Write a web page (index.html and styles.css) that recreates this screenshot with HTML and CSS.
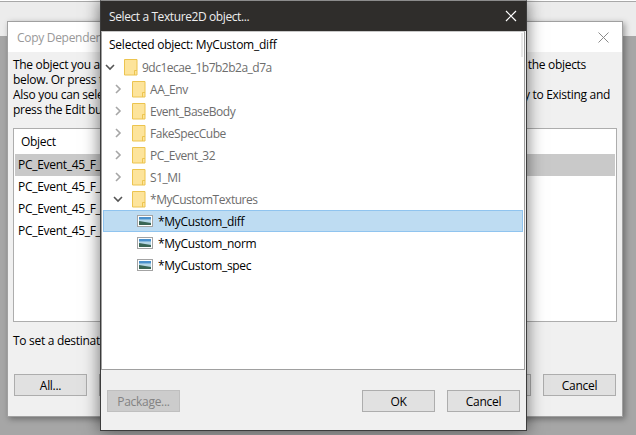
FILE: index.html
```html
<!DOCTYPE html>
<html lang="en">

<head>
    <meta charset="UTF-8">
    <title>Select a Texture2D object</title>
    <link rel="stylesheet" href="styles.css">
</head>

<body>
    <svg class="defs" width="0" height="0">
        <symbol id="folder" viewBox="0 0 14 17">
            <path d="M.5.5h12.5v15.5h-12.5z" fill="#fde49b" stroke="#ecc44f" />
            <path d="M10.5 16v-4.5h2.5" fill="none" stroke="#ecc44f" />
        </symbol>
        <symbol id="pic" viewBox="0 0 16 12">
            <rect x=".5" y=".5" width="15" height="11" fill="#fff" stroke="#a3a3a3" />
            <rect x="2" y="2" width="12" height="8" fill="#b5d6e6" />
            <rect x="2" y="2" width="12" height="2" fill="#4a90cc" />
            <rect x="2" y="4" width="12" height="1" fill="#86b8dc" />
            <path d="M2 6l6 1 6 1v2h-12z" fill="#3a6655" />
        </symbol>
        <symbol id="open" viewBox="0 0 10 10">
            <path d="M1 3l4 4 4-4" fill="none" stroke="#555" stroke-width="1.6" />
        </symbol>
        <symbol id="closed" viewBox="0 0 10 10">
            <path d="M3 1l4 4-4 4" fill="none" stroke="#a6a6a6" stroke-width="1.6" />
        </symbol>
    </svg>

    <div class="topband"></div>

    <!-- dialog behind -->
    <div class="window back">
        <div class="back-title">
            <span>Copy Dependen</span>
            <svg class="x" width="11" height="11" viewBox="0 0 11 11">
                <path d="M.5.5l10 10M10.5.5l-10 10" stroke="#8a8a8a" fill="none" />
            </svg>
        </div>
        <div class="back-body">
            <div class="intro">
                <p class="short"><span>The object you a</span><span>the objects</span></p>
                <p><span>below. Or press t</span></p>
                <p><span>Also you can sele</span><span>y to Existing and</span></p>
                <p><span>press the Edit bu</span></p>
            </div>
            <div class="list">
                <div class="list-head">Object</div>
                <div class="list-row active">PC_Event_45_F_</div>
                <div class="list-row">PC_Event_45_F_</div>
                <div class="list-row">PC_Event_45_F_</div>
                <div class="list-row">PC_Event_45_F_</div>
            </div>
            <p class="dest">To set a destinati</p>
            <div class="back-btns">
                <button>All...</button>
                <button></button>
                <span class="spring"></span>
                <button></button>
                <button>Cancel</button>
            </div>
        </div>
    </div>

    <!-- front dialog -->
    <div class="window front">
        <div class="front-title">
            <span>Select a Texture2D object...</span>
            <svg width="12" height="12" viewBox="0 0 12 12">
                <path d="M1 1l10 10M11 1l-10 10" stroke="#fff" stroke-width="1.2" fill="none" />
            </svg>
        </div>
        <div class="pane">
            <div class="selected">Selected object: MyCustom_diff</div>
            <div class="bar"></div>
            <ul class="tree">
                <li class="root"><svg class="arrow"><use href="#open" /></svg><svg class="folder"><use href="#folder" /></svg>9dc1ecae_1b7b2b2a_d7a</li>
                <li><svg class="arrow"><use href="#closed" /></svg><svg class="folder"><use href="#folder" /></svg>AA_Env</li>
                <li><svg class="arrow"><use href="#closed" /></svg><svg class="folder"><use href="#folder" /></svg>Event_BaseBody</li>
                <li><svg class="arrow"><use href="#closed" /></svg><svg class="folder"><use href="#folder" /></svg>FakeSpecCube</li>
                <li><svg class="arrow"><use href="#closed" /></svg><svg class="folder"><use href="#folder" /></svg>PC_Event_32</li>
                <li><svg class="arrow"><use href="#closed" /></svg><svg class="folder"><use href="#folder" /></svg>S1_MI</li>
                <li><svg class="arrow"><use href="#open" /></svg><svg class="folder"><use href="#folder" /></svg>*MyCustomTextures</li>
                <li class="tex current"><svg class="pic"><use href="#pic" /></svg>*MyCustom_diff</li>
                <li class="tex"><svg class="pic"><use href="#pic" /></svg>*MyCustom_norm</li>
                <li class="tex"><svg class="pic"><use href="#pic" /></svg>*MyCustom_spec</li>
            </ul>
        </div>
        <div class="front-btns">
            <button disabled>Package...</button>
            <span class="spring"></span>
            <button>OK</button>
            <button>Cancel</button>
        </div>
    </div>
</body>

</html>
```

FILE: styles.css
```css
* {
    margin: 0;
    padding: 0;
    box-sizing: border-box;
    list-style: none;
}

body {
    width: 636px;
    height: 435px;
    overflow: hidden;
    position: relative;
    background: #a6a6a6;
    font-family: "Open Sans", "Liberation Sans", sans-serif;
    font-size: 12px;
    letter-spacing: -.3px;
    color: #000;
}

.defs {
    position: absolute;
}

.topband {
    height: 36px;
    background: #ececec;
    border-top: 1px solid #fff;
    box-shadow: inset 0 1px 0 #a8a8a8;
}

.window {
    position: absolute;
}

button {
    width: 73px;
    height: 22px;
    background: #e1e1e1;
    border: 1px solid #adadad;
    font: inherit;
    letter-spacing: inherit;
    color: #000;
}

.spring {
    flex: 1;
}

/* back dialog */
.back {
    left: 7px;
    top: 21px;
    width: 616px;
    height: 396px;
    border: 1px solid #a0a0a0;
    background: #f0f0f0;
    box-shadow: 2px 2px 6px rgba(0, 0, 0, .35);
    display: flex;
    flex-direction: column;
}

.back-title {
    height: 30px;
    flex: none;
    background: #fff;
    color: #999;
    padding: 0 13px 0 9px;
    display: flex;
    align-items: center;
    justify-content: space-between;
}

.back-body {
    flex: 1;
    padding: 5px 5px 0;
    display: flex;
    flex-direction: column;
}

.intro {
    line-height: 15px;
}

.intro p {
    display: flex;
    justify-content: space-between;
    padding-right: 7px;
}

.intro p.short {
    padding-right: 31px;
}

.list {
    height: 194px;
    margin-top: 11px;
    border: 1px solid #adadad;
    background: #fff;
    padding: 1px;
}

.list-head {
    height: 24px;
    line-height: 24px;
    padding-left: 6px;
}

.list-row {
    height: 22px;
    line-height: 22px;
    padding-left: 3px;
}

.list-row.active {
    background: #c9c9c9;
}

.dest {
    margin-top: 11px;
    line-height: 15px;
}

.back-btns {
    margin-top: 26px;
    padding: 0 1px;
    display: flex;
    gap: 12px;
}

/* front dialog */
.front {
    left: 100px;
    top: 0;
    width: 427px;
    height: 431px;
    border: 1px solid #3c3c3c;
    border-top-color: #8c8c8c;
    background: #f0f0f0;
    box-shadow: 0 0 16px rgba(0, 0, 0, .55);
    display: flex;
    flex-direction: column;
}

.front-title {
    height: 30px;
    flex: none;
    background: #2f2d2b;
    color: #eee;
    letter-spacing: -.4px;
    padding: 0 9px 0 8px;
    display: flex;
    align-items: center;
    justify-content: space-between;
}

.pane {
    height: 339px;
    flex: none;
    position: relative;
    margin-right: 1px;
    border: 1px solid #a0a0a0;
    border-top-color: #c8c8c8;
    background: #fff;
}

.selected {
    height: 24px;
    line-height: 26px;
    letter-spacing: -.24px;
    padding-left: 7px;
}

.bar {
    position: absolute;
    right: 1px;
    top: 1px;
    width: 2px;
    height: 24px;
    background: #e8e8e8;
}

.tree {
    margin: 0 1px;
}

.tree li {
    height: 22px;
    display: flex;
    align-items: center;
    color: #6d6d6d;
    letter-spacing: -.45px;
    padding-left: 10px;
}

.tree li.root {
    letter-spacing: -.5px;
    padding-left: 2px;
}

.arrow {
    width: 10px;
    height: 10px;
    margin-right: 9px;
}

.folder {
    width: 14px;
    height: 17px;
    margin-right: 4px;
}

.tree li.tex {
    color: #000;
    letter-spacing: -.3px;
    padding-left: 34px;
}

.pic {
    width: 16px;
    height: 12px;
    margin-right: 5px;
}

.tree li.current {
    background: #bedcf2;
    border: 1px solid #90c4ef;
    padding-left: 33px;
}

.front-btns {
    flex: 1;
    padding: 20px 6px 0;
    display: flex;
    align-items: flex-start;
    gap: 12px;
}

button[disabled] {
    background: #cccccc;
    border-color: #bfbfbf;
    color: #838383;
}
```
